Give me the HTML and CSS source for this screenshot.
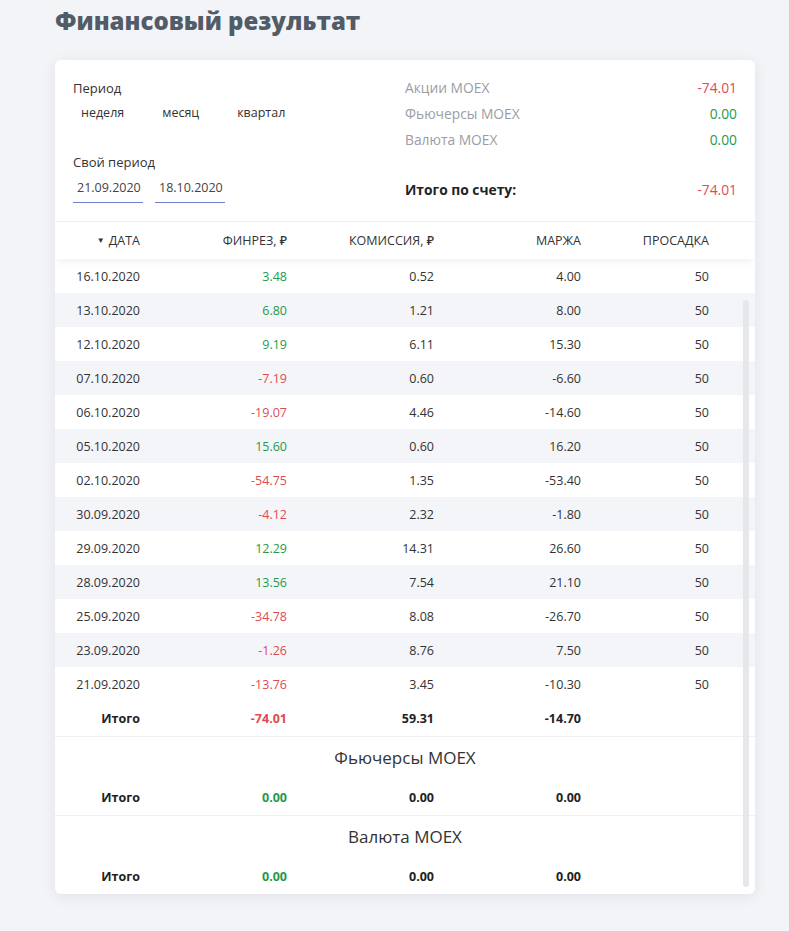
FILE: index.html
```html
<!DOCTYPE html>
<html lang="ru">
<head>
<meta charset="utf-8">
<title>Финансовый результат</title>
<link rel="stylesheet" href="styles.css">
</head>
<body>
<h1 class="page-title">Финансовый результат</h1>
<div class="card">
  <div class="summary">
    <div class="filters">
      <div class="label">Период</div>
      <div class="periods">
        <span class="period-btn">неделя</span>
        <span class="period-btn">месяц</span>
        <span class="period-btn">квартал</span>
      </div>
      <div class="label custom">Свой период</div>
      <div class="dates">
        <span class="date-input">21.09.2020</span>
        <span class="date-input">18.10.2020</span>
      </div>
    </div>
    <div class="accounts">
      <div class="acc-row"><span class="acc-name">Акции MOEX</span><span class="neg">-74.01</span></div>
      <div class="acc-row"><span class="acc-name">Фьючерсы MOEX</span><span class="pos">0.00</span></div>
      <div class="acc-row"><span class="acc-name">Валюта MOEX</span><span class="pos">0.00</span></div>
      <div class="acc-row total"><span class="acc-total">Итого по счету:</span><span class="neg">-74.01</span></div>
    </div>
  </div>

  <table class="grid">
    <colgroup>
      <col class="c1"><col class="c2"><col class="c3"><col class="c4"><col class="c5">
    </colgroup>
    <thead>
      <tr>
        <th><span class="sort">&#9660;</span>Дата</th>
        <th>Финрез, ₽</th>
        <th>Комиссия, ₽</th>
        <th>Маржа</th>
        <th>Просадка</th>
      </tr>
    </thead>
    <tbody>
      <tr><td>16.10.2020</td><td class="pos">3.48</td><td>0.52</td><td>4.00</td><td>50</td></tr>
      <tr><td>13.10.2020</td><td class="pos">6.80</td><td>1.21</td><td>8.00</td><td>50</td></tr>
      <tr><td>12.10.2020</td><td class="pos">9.19</td><td>6.11</td><td>15.30</td><td>50</td></tr>
      <tr><td>07.10.2020</td><td class="neg">-7.19</td><td>0.60</td><td>-6.60</td><td>50</td></tr>
      <tr><td>06.10.2020</td><td class="neg">-19.07</td><td>4.46</td><td>-14.60</td><td>50</td></tr>
      <tr><td>05.10.2020</td><td class="pos">15.60</td><td>0.60</td><td>16.20</td><td>50</td></tr>
      <tr><td>02.10.2020</td><td class="neg">-54.75</td><td>1.35</td><td>-53.40</td><td>50</td></tr>
      <tr><td>30.09.2020</td><td class="neg">-4.12</td><td>2.32</td><td>-1.80</td><td>50</td></tr>
      <tr><td>29.09.2020</td><td class="pos">12.29</td><td>14.31</td><td>26.60</td><td>50</td></tr>
      <tr><td>28.09.2020</td><td class="pos">13.56</td><td>7.54</td><td>21.10</td><td>50</td></tr>
      <tr><td>25.09.2020</td><td class="neg">-34.78</td><td>8.08</td><td>-26.70</td><td>50</td></tr>
      <tr><td>23.09.2020</td><td class="neg">-1.26</td><td>8.76</td><td>7.50</td><td>50</td></tr>
      <tr><td>21.09.2020</td><td class="neg">-13.76</td><td>3.45</td><td>-10.30</td><td>50</td></tr>
      <tr class="sum"><td>Итого</td><td class="neg">-74.01</td><td>59.31</td><td>-14.70</td><td></td></tr>
    </tbody>
  </table>

  <div class="section">
    <div class="section-title">Фьючерсы MOEX</div>
    <table class="grid">
      <colgroup>
        <col class="c1"><col class="c2"><col class="c3"><col class="c4"><col class="c5">
      </colgroup>
      <tbody>
        <tr class="sum tall"><td>Итого</td><td class="pos">0.00</td><td>0.00</td><td>0.00</td><td></td></tr>
      </tbody>
    </table>
  </div>

  <div class="section">
    <div class="section-title">Валюта MOEX</div>
    <table class="grid">
      <colgroup>
        <col class="c1"><col class="c2"><col class="c3"><col class="c4"><col class="c5">
      </colgroup>
      <tbody>
        <tr class="sum tall"><td>Итого</td><td class="pos">0.00</td><td>0.00</td><td>0.00</td><td></td></tr>
      </tbody>
    </table>
  </div>

  <div class="scrollbar"></div>
</div>
</body>
</html>
```

FILE: styles.css
```css
* { box-sizing: border-box; }

html, body {
  margin: 0;
  background: #f3f4f8;
}

body {
  padding: 0 34px 40px 55px;
  font-family: "Open Sans", "Noto Sans", sans-serif;
  font-size: 13px;
  color: #333;
}

.page-title {
  margin: 0;
  height: 60px;
  padding-top: 5px;
  font-size: 24px;
  line-height: 32px;
  font-weight: 800;
  color: #525c66;
}

.card {
  position: relative;
  width: 700px;
  background: #fff;
  border-radius: 6px;
  box-shadow: 0 3px 14px rgba(30, 40, 70, 0.08);
  overflow: hidden;
}

.summary {
  display: grid;
  grid-template-columns: 332px 1fr;
  height: 162px;
  padding: 18px 18px 0 18px;
  border-bottom: 1px solid #eef0f4;
}

.label {
  line-height: 20px;
  font-size: 13px;
  color: #333;
}

.label.custom { margin-top: 29px; }

.periods {
  display: flex;
  gap: 22px;
  margin-top: 5px;
}

.period-btn {
  padding: 0 8px;
  line-height: 20px;
  font-size: 12.5px;
  color: #333;
}

.dates {
  display: flex;
  gap: 12px;
  margin-top: 6px;
}

.date-input {
  width: 70px;
  padding: 0 0 4px 4px;
  line-height: 20px;
  font-size: 12.5px;
  color: #444;
  border-bottom: 1px solid #6f7fc8;
}

.accounts {
  display: flex;
  flex-direction: column;
}

.acc-row {
  display: flex;
  justify-content: space-between;
  line-height: 20px;
  height: 26px;
  font-size: 13.8px;
}

.acc-row.total {
  margin-top: 24px;
}

.acc-name { color: #9a9da3; }

.acc-total {
  font-weight: 700;
  color: #222;
  font-size: 13.8px;
}

.pos { color: #1f9a4c; }
.neg { color: #de4c52; }

.grid {
  width: 700px;
  border-collapse: collapse;
  table-layout: fixed;
}

.c1 { width: 100px; }
.c2, .c3, .c4 { width: 147px; }
.c5 { width: 159px; }

.grid th,
.grid td {
  padding: 0 15px 0 0;
  text-align: right;
  white-space: nowrap;
}

.grid th:last-child,
.grid td:last-child { padding-right: 46px; }

.grid thead tr {
  height: 37px;
  box-shadow: 0 4px 8px -2px rgba(0, 0, 0, 0.07);
}

.grid th {
  font-weight: 500;
  font-size: 12.5px;
  text-transform: uppercase;
  color: #333;
}

.sort {
  font-size: 8px;
  margin-right: 4px;
  vertical-align: 2px;
}

.grid tbody tr { height: 34px; }

.grid tbody tr:nth-child(even):not(.sum) { background: #f4f5f9; }

.grid td {
  font-size: 12.5px;
  color: #333;
}

.grid td.pos { color: #1f9a4c; }
.grid td.neg { color: #de4c52; }

.grid .sum td {
  font-weight: 700;
  color: #222;
}

.grid .sum td.pos { color: #1f9a4c; }
.grid .sum td.neg { color: #de4c52; }

.grid tbody tr.sum { height: 35px; }
.grid tbody tr.sum.tall { height: 36px; }

.section {
  border-top: 1px solid #eef0f4;
}

.section-title {
  height: 42px;
  line-height: 42px;
  text-align: center;
  font-size: 17px;
  color: #333;
}

.scrollbar {
  position: absolute;
  right: 6px;
  top: 240px;
  bottom: 7px;
  width: 6px;
  border-radius: 3px;
  background: #e6e7eb;
}
```
